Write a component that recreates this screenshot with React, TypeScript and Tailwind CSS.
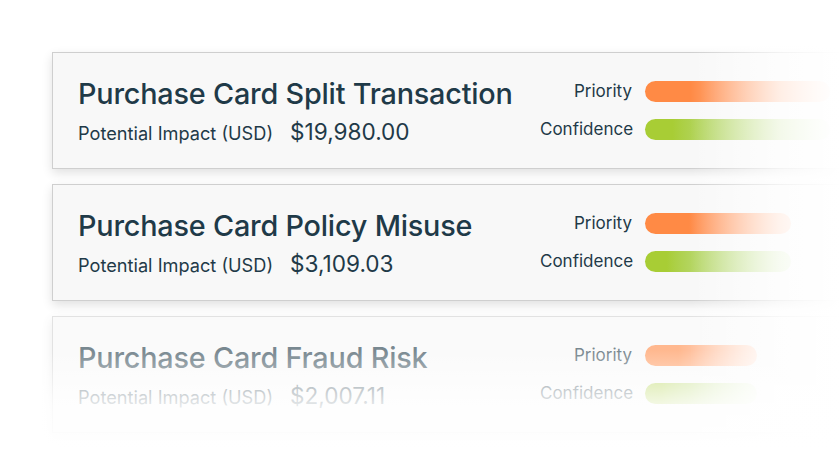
const font = { fontFamily: "Inter, 'Noto Sans', sans-serif" };

type Item = { title: string; amount: string; barW: string };

const items: Item[] = [
  { title: "Purchase Card Split Transaction", amount: "$19,980.00", barW: "w-[185px]" },
  { title: "Purchase Card Policy Misuse", amount: "$3,109.03", barW: "w-[146px]" },
  { title: "Purchase Card Fraud Risk", amount: "$2,007.11", barW: "w-[112px]" },
];

function Card({ item, faded }: { item: Item; faded?: boolean }) {
  return (
    <div
      className={`h-[117px] w-[820px] shrink-0 border border-[#cfcfcf] bg-[#f8f8f8] shadow-[0_4px_10px_rgba(0,0,0,0.12)] flex items-center pl-[25px] ${
        faded ? "opacity-60" : ""
      }`}
    >
      <div className="flex flex-col w-[450px] text-[#1f3a48] mt-[4px]">
        <div className="text-[28.8px] font-medium leading-[34px] tracking-[-0.2px] whitespace-nowrap">
          {item.title}
        </div>
        <div className="flex items-baseline gap-[17px] mt-[4px]">
          <span className="text-[18.2px]">Potential Impact (USD)</span>
          <span className="text-[22.6px]">{item.amount}</span>
        </div>
      </div>
      <div className="ml-[12px] grid grid-cols-[92px_auto] gap-x-[13px] gap-y-[17px] items-center mt-[-1px]">
        <span className="text-[17px] leading-[21px] text-right text-[#1f3a48]">Priority</span>
        <div className={`h-[21px] ${item.barW} rounded-full bg-gradient-to-r from-[#ff8a45] from-30% to-[#ffd9c6]`} />
        <span className="text-[17px] leading-[21px] text-right text-[#1f3a48]">Confidence</span>
        <div className={`h-[21px] ${item.barW} rounded-full bg-gradient-to-r from-[#a8cd35] from-15% to-[#e6f3d6]`} />
      </div>
    </div>
  );
}

export default function App() {
  return (
    <div className="relative w-[840px] h-[462px] overflow-hidden bg-white" style={font}>
      <div className="flex flex-col gap-[15px] pt-[52px] pl-[52px]">
        {items.map((item, i) => (
          <Card key={item.title} item={item} faded={i === 2} />
        ))}
      </div>
      <div className="absolute top-0 bottom-0 right-0 w-[150px] bg-gradient-to-r from-white/0 via-white/75 via-60% to-white" />
      <div className="absolute left-0 right-0 top-[350px] bottom-0 bg-gradient-to-b from-white/0 via-white/80 to-white" />
    </div>
  );
}
